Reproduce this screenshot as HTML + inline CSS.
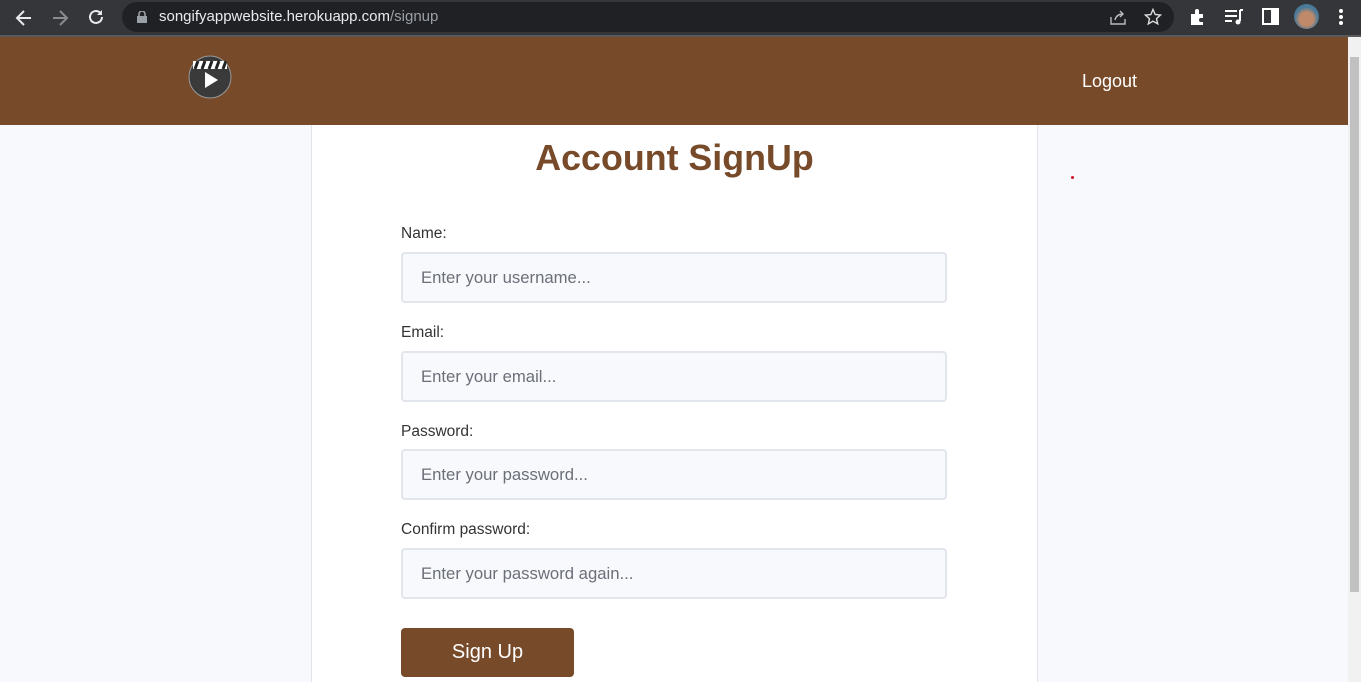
<!DOCTYPE html>
<html><head><style>
*{margin:0;padding:0;box-sizing:border-box}
body{width:1361px;height:682px;overflow:hidden;font-family:"Liberation Sans",sans-serif;background:#f8f9fd;position:relative}
.chrome{position:absolute;left:0;top:0;width:1361px;height:37px;background:#35363a;border-bottom:2px solid #5a5a5c}
.url{position:absolute;left:122px;top:2px;width:1052px;height:30px;border-radius:15px;background:#202124;color:#e8eaed;font-size:15px;line-height:30px;padding-left:37px}
.url span{color:#9aa0a6}
.hdr{position:absolute;left:0;top:37px;width:1348px;height:88px;background:#774a2a}
.sb{position:absolute;left:1348px;top:37px;width:13px;height:645px;background:#f1f1f1}
.sb div{position:absolute;left:2px;top:20px;width:9px;height:535px;background:#c1c1c1}
.main{position:absolute;left:311px;top:125px;width:727px;height:557px;background:#fff;border-left:1px solid #e4e4e8;border-right:1px solid #e4e4e8}
h1{position:absolute;left:0;width:725px;top:13px;text-align:center;color:#774a2a;font-size:35.8px;font-weight:bold}
label{position:absolute;left:89px;font-size:15.5px;color:#333}
.in{position:absolute;left:89px;width:546px;height:51px;border:2px solid #e2e5ec;border-radius:4px;background:#f8f9fd;color:#6b6f78;font-size:16.7px;line-height:47px;padding-left:18px}
.btn{position:absolute;left:89px;top:503px;width:173px;height:49px;background:#774a2a;border-radius:4px;color:#fff;font-size:20px;text-align:center;line-height:49px}
</style></head><body>
<div class="chrome">
<svg style="position:absolute;left:14px;top:8px" width="20" height="20" viewBox="0 0 20 20"><path d="M17 10H4M10 3L3 10l7 7" stroke="#e8eaed" stroke-width="2" fill="none"/></svg>
<svg style="position:absolute;left:50px;top:8px" width="20" height="20" viewBox="0 0 20 20"><path d="M3 10h13M10 3l7 7-7 7" stroke="#8a8b8e" stroke-width="2" fill="none"/></svg>
<svg style="position:absolute;left:86px;top:7px" width="20" height="20" viewBox="0 0 20 20"><path d="M16 10a6 6 0 1 1-2-4.5" stroke="#e8eaed" stroke-width="2" fill="none"/><path d="M16 3v5h-5z" fill="#e8eaed"/></svg>
<div class="url"><svg style="position:absolute;left:15px;top:9px" width="10" height="12"><rect x="0" y="5" width="10" height="7" fill="#9aa0a6"/><path d="M2 5V3a3 3 0 0 1 6 0v2" stroke="#9aa0a6" stroke-width="1.6" fill="none"/></svg>songifyappwebsite.herokuapp.com<span>/signup</span>
<svg style="position:absolute;left:987px;top:7px" width="18" height="16"><path d="M2 8v7h14V10M6 11c1-4 4-6 8-6M11 2l3 3-3 3" stroke="#bbb" stroke-width="1.4" fill="none"/></svg>
<svg style="position:absolute;left:1022px;top:6px" width="18" height="18"><path d="M9 1.5l2.2 5 5.3.5-4 3.6 1.2 5.3L9 13.2 4.3 16l1.2-5.3-4-3.6 5.3-.5z" stroke="#ddd" stroke-width="1.4" fill="none"/></svg>
</div>
<svg style="position:absolute;left:1189px;top:8px" width="18" height="18"><path d="M2 6h4V3a2 2 0 0 1 4 0v3h4v4h-2a2 2 0 0 0 0 4h2v3H2z" fill="#fff"/></svg>
<svg style="position:absolute;left:1224px;top:8px" width="20" height="18"><path d="M1 3h12M1 8h12M1 13h7" stroke="#fff" stroke-width="2"/><path d="M16 2v11" stroke="#fff" stroke-width="2"/><circle cx="14" cy="14" r="2.5" fill="#fff"/><path d="M16 2h3" stroke="#fff" stroke-width="2"/></svg>
<svg style="position:absolute;left:1262px;top:8px" width="17" height="17"><rect x="1" y="1" width="15" height="15" stroke="#fff" stroke-width="2" fill="none"/><rect x="9" y="1" width="7" height="15" fill="#fff"/></svg>
<div style="position:absolute;left:1294px;top:4px;width:25px;height:25px;border-radius:50%;background:radial-gradient(circle at 50% 60%,#c08a6a 0 35%,#4a7a9a 60%)"></div>
<svg style="position:absolute;left:1338px;top:8px" width="6" height="18"><circle cx="3" cy="3" r="2" fill="#fff"/><circle cx="3" cy="9" r="2" fill="#fff"/><circle cx="3" cy="15" r="2" fill="#fff"/></svg>
</div>
<div class="hdr">
<svg style="position:absolute;left:188px;top:18px" width="44" height="44" viewBox="0 0 44 44"><circle cx="22" cy="22" r="21" fill="#3a3a3a" stroke="#999" stroke-width="1"/><rect x="5" y="6" width="34" height="8" fill="#fff"/><path d="M10 6l-3 8M17 6l-3 8M24 6l-3 8M31 6l-3 8M38 6l-3 8" stroke="#222" stroke-width="3"/><path d="M17 17v16l13-8z" fill="#fff"/></svg>
<div style="position:absolute;left:1082px;top:34px;color:#fff;font-size:18px">Logout</div>
</div>
<div class="sb"><div></div></div>
<div class="main">
<h1>Account SignUp</h1>
<label style="top:100px">Name:</label>
<div class="in" style="top:127px">Enter your username...</div>
<label style="top:199px">Email:</label>
<div class="in" style="top:226px">Enter your email...</div>
<label style="top:298px">Password:</label>
<div class="in" style="top:324px">Enter your password...</div>
<label style="top:396px">Confirm password:</label>
<div class="in" style="top:423px">Enter your password again...</div>
<div class="btn">Sign Up</div>
</div>
<div style="position:absolute;left:1071px;top:176px;width:3px;height:3px;border-radius:50%;background:#d0102a"></div>
</body></html>
